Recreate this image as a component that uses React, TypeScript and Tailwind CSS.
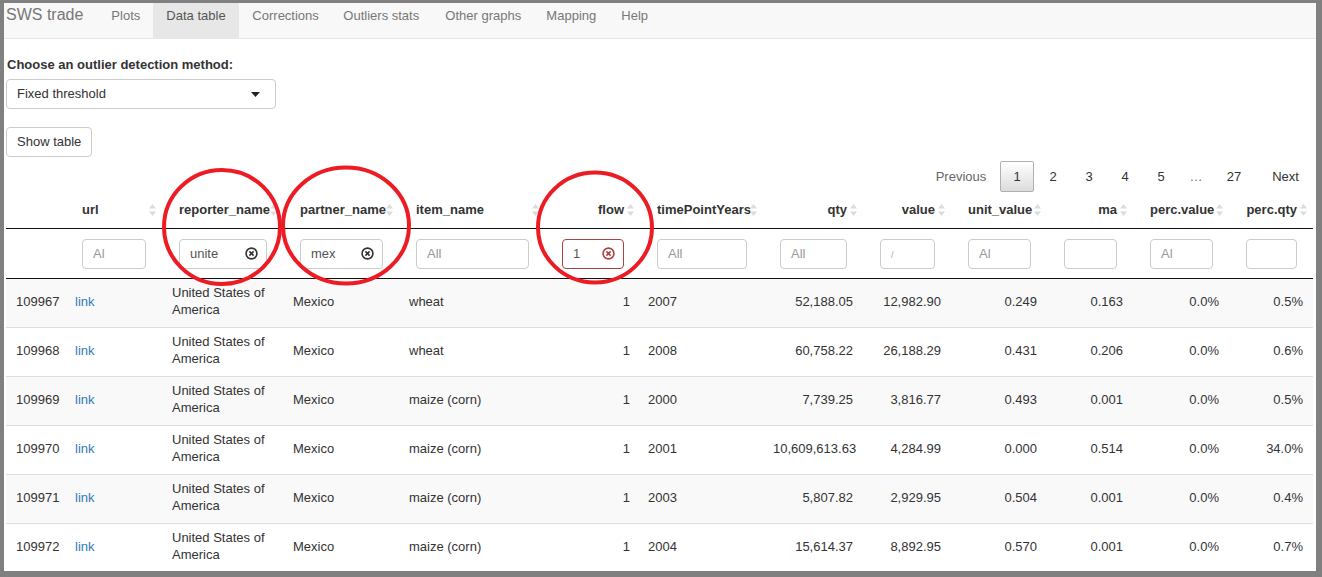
import React from "react";

type Col = {
  key: string;
  label: string;
  w: number;
  right?: boolean;
  filter?: { kind: "placeholder" | "value" | "clip" | "empty"; text?: string; error?: boolean };
};

const cols: Col[] = [
  { key: "idx", label: "", w: 59 },
  { key: "url", label: "url", w: 97, filter: { kind: "placeholder", text: "Al" } },
  { key: "reporter", label: "reporter_name", w: 121, filter: { kind: "value", text: "unite" } },
  { key: "partner", label: "partner_name", w: 116, filter: { kind: "value", text: "mex" } },
  { key: "item", label: "item_name", w: 146, filter: { kind: "placeholder", text: "All" } },
  { key: "flow", label: "flow", w: 95, right: true, filter: { kind: "value", text: "1", error: true } },
  { key: "year", label: "timePointYears", w: 123, filter: { kind: "placeholder", text: "All" } },
  { key: "qty", label: "qty", w: 100, right: true, filter: { kind: "placeholder", text: "All" } },
  { key: "value", label: "value", w: 88, right: true, filter: { kind: "clip" } },
  { key: "unit", label: "unit_value", w: 96, right: true, filter: { kind: "placeholder", text: "Al" } },
  { key: "ma", label: "ma", w: 86, right: true, filter: { kind: "empty" } },
  { key: "pv", label: "perc.value", w: 96, right: true, filter: { kind: "placeholder", text: "Al" } },
  { key: "pq", label: "perc.qty", w: 84, right: true, filter: { kind: "empty" } },
];

const rows = [
  ["109967", "wheat", "2007", "52,188.05", "12,982.90", "0.249", "0.163", "0.0%", "0.5%"],
  ["109968", "wheat", "2008", "60,758.22", "26,188.29", "0.431", "0.206", "0.0%", "0.6%"],
  ["109969", "maize (corn)", "2000", "7,739.25", "3,816.77", "0.493", "0.001", "0.0%", "0.5%"],
  ["109970", "maize (corn)", "2001", "10,609,613.63", "4,284.99", "0.000", "0.514", "0.0%", "34.0%"],
  ["109971", "maize (corn)", "2003", "5,807.82", "2,929.95", "0.504", "0.001", "0.0%", "0.4%"],
  ["109972", "maize (corn)", "2004", "15,614.37", "8,892.95", "0.570", "0.001", "0.0%", "0.7%"],
];

const navItems = [
  { label: "Plots", w: 55 },
  { label: "Data table", w: 86, active: true },
  { label: "Corrections", w: 91 },
  { label: "Outliers stats", w: 102 },
  { label: "Other graphs", w: 101 },
  { label: "Mapping", w: 75 },
  { label: "Help", w: 53 },
];

function SortIcon() {
  return (
    <svg width="7" height="13" viewBox="0 0 7 13" className="absolute right-[6px] top-1/2 -translate-y-1/2">
      <polygon points="0,5 3.5,0.5 7,5" fill="#dcdcdc" />
      <polygon points="0,8 3.5,12.5 7,8" fill="#dcdcdc" />
    </svg>
  );
}

function ClearIcon({ color }: { color: string }) {
  return (
    <svg width="13" height="13" viewBox="0 0 13 13">
      <circle cx="6.5" cy="6.5" r="5.4" fill="none" stroke={color} strokeWidth="1.6" />
      <path d="M4.4 4.4 L8.6 8.6 M8.6 4.4 L4.4 8.6" stroke={color} strokeWidth="1.6" />
    </svg>
  );
}

function FilterBox({ col }: { col: Col }) {
  const f = col.filter;
  if (!f) return null;
  const width = col.w - 33;
  const border = f.error ? "border-[#a94442]" : "border-[#cccccc]";
  return (
    <div
      className={`flex h-[30px] items-center overflow-hidden rounded-[4px] border bg-white pl-[10px] pr-[8px] text-left ${border}`}
      style={{ width }}
    >
      {f.kind === "placeholder" && <span className="text-[#999]">{f.text}</span>}
      {f.kind === "clip" && <span className="mt-[5px] text-[9px] text-[#aaa]">/</span>}
      {f.kind === "value" && (
        <>
          <span className="flex-1 text-left text-[#555]">{f.text}</span>
          <ClearIcon color={f.error ? "#a94442" : "#333"} />
        </>
      )}
    </div>
  );
}

export default function App() {
  return (
    <div className="relative h-[577px] w-[1322px] overflow-hidden bg-[#808080] pb-[6px] pl-[4px] pr-[6px] pt-[3px] font-['Liberation_Sans',Arial,sans-serif] text-[13px] text-[#333]">
      <div className="h-full w-full overflow-hidden bg-white">
        <nav className="flex h-[36px] border-b border-[#e7e7e7] bg-[#f8f8f8]">
          <div className="pl-[2px] pr-[15px] pt-[2px] text-[16px] leading-[20px] text-[#777]">SWS trade</div>
          {navItems.map((n) => (
            <div
              key={n.label}
              className={`pl-[13px] pt-[3px] leading-[20px] ${n.active ? "bg-[#e7e7e7] text-[#555]" : "text-[#777]"}`}
              style={{ width: n.w }}
            >
              {n.label}
            </div>
          ))}
        </nav>

        <div className="px-[2px]">
          <p className="mt-[17px] pl-[1px] font-bold leading-[17px]">Choose an outlier detection method:</p>
          <div className="mt-[6px] flex h-[30px] w-[270px] items-center justify-between rounded-[4px] border border-[#cccccc] pl-[10px] pr-[15px]">
            <span>Fixed threshold</span>
            <svg width="9" height="5" viewBox="0 0 9 5">
              <polygon points="0,0 9,0 4.5,5" fill="#222" />
            </svg>
          </div>
          <button className="mt-[18px] h-[30px] rounded-[4px] border border-[#cccccc] bg-white px-[10px] pb-[1px] leading-[17px]">
            Show table
          </button>

          <div className="mt-[4px] flex h-[31px] items-center justify-end pb-[1px] pr-[1px] leading-[17px]">
            <span className="w-[74px] text-center text-[#666]">Previous</span>
            <span className="ml-[2px] flex h-[31px] w-[34px] items-center justify-center rounded-[2px] border border-[#b0b0b0] bg-gradient-to-b from-white to-[#dcdcdc]">
              1
            </span>
            {["2", "3", "4", "5"].map((p) => (
              <span key={p} className="ml-[2px] w-[34px] text-center">
                {p}
              </span>
            ))}
            <span className="ml-[2px] w-[32px] text-center text-[#777]">…</span>
            <span className="ml-[2px] w-[40px] text-center">27</span>
            <span className="ml-[4px] w-[55px] text-center">Next</span>
          </div>

          <table className="table-fixed border-separate border-spacing-0" style={{ width: 1307 }}>
            <colgroup>
              {cols.map((c) => (
                <col key={c.key} style={{ width: c.w }} />
              ))}
            </colgroup>
            <thead>
              <tr>
                {cols.map((c) => (
                  <th
                    key={c.key}
                    className={`relative h-[37px] whitespace-nowrap border-b border-[#111] pl-[17px] pr-[16px] font-bold ${c.right ? "text-right" : "text-left"}`}
                  >
                    {c.label}
                    {c.label && <SortIcon />}
                  </th>
                ))}
              </tr>
              <tr>
                {cols.map((c) => (
                  <th key={c.key} className="h-[50px] border-b border-[#111] pl-[17px] pr-[16px] text-left font-normal">
                    <FilterBox col={c} />
                  </th>
                ))}
              </tr>
            </thead>
            <tbody>
              {rows.map((r, i) => {
                const cells = [r[0], "link", "United States of America", "Mexico", r[1], "1", r[2], r[3], r[4], r[5], r[6], r[7], r[8]];
                return (
                  <tr key={r[0]} className={i % 2 === 0 ? "bg-[#f9f9f9]" : "bg-white"}>
                    {cells.map((v, j) => (
                      <td
                        key={j}
                        className={`h-[49px] border-b border-[#dddddd] px-[10px] pb-[4px] leading-[17px] ${cols[j].right ? "text-right" : "text-left"} ${j === 6 ? "pl-[8px]" : ""} ${j === 1 ? "text-[#337ab7]" : ""} ${cols[j].right ? "whitespace-nowrap" : ""}`}
                      >
                        {v}
                      </td>
                    ))}
                  </tr>
                );
              })}
            </tbody>
          </table>
        </div>
      </div>

      <svg className="pointer-events-none absolute left-0 top-0" width="1322" height="577">
        <ellipse cx="222" cy="227" rx="58" ry="57" fill="none" stroke="#ed1c24" strokeWidth="4" />
        <ellipse cx="346" cy="225.5" rx="63" ry="58" fill="none" stroke="#ed1c24" strokeWidth="4" />
        <ellipse cx="595" cy="227.5" rx="57" ry="55" fill="none" stroke="#ed1c24" strokeWidth="4" />
      </svg>
    </div>
  );
}
